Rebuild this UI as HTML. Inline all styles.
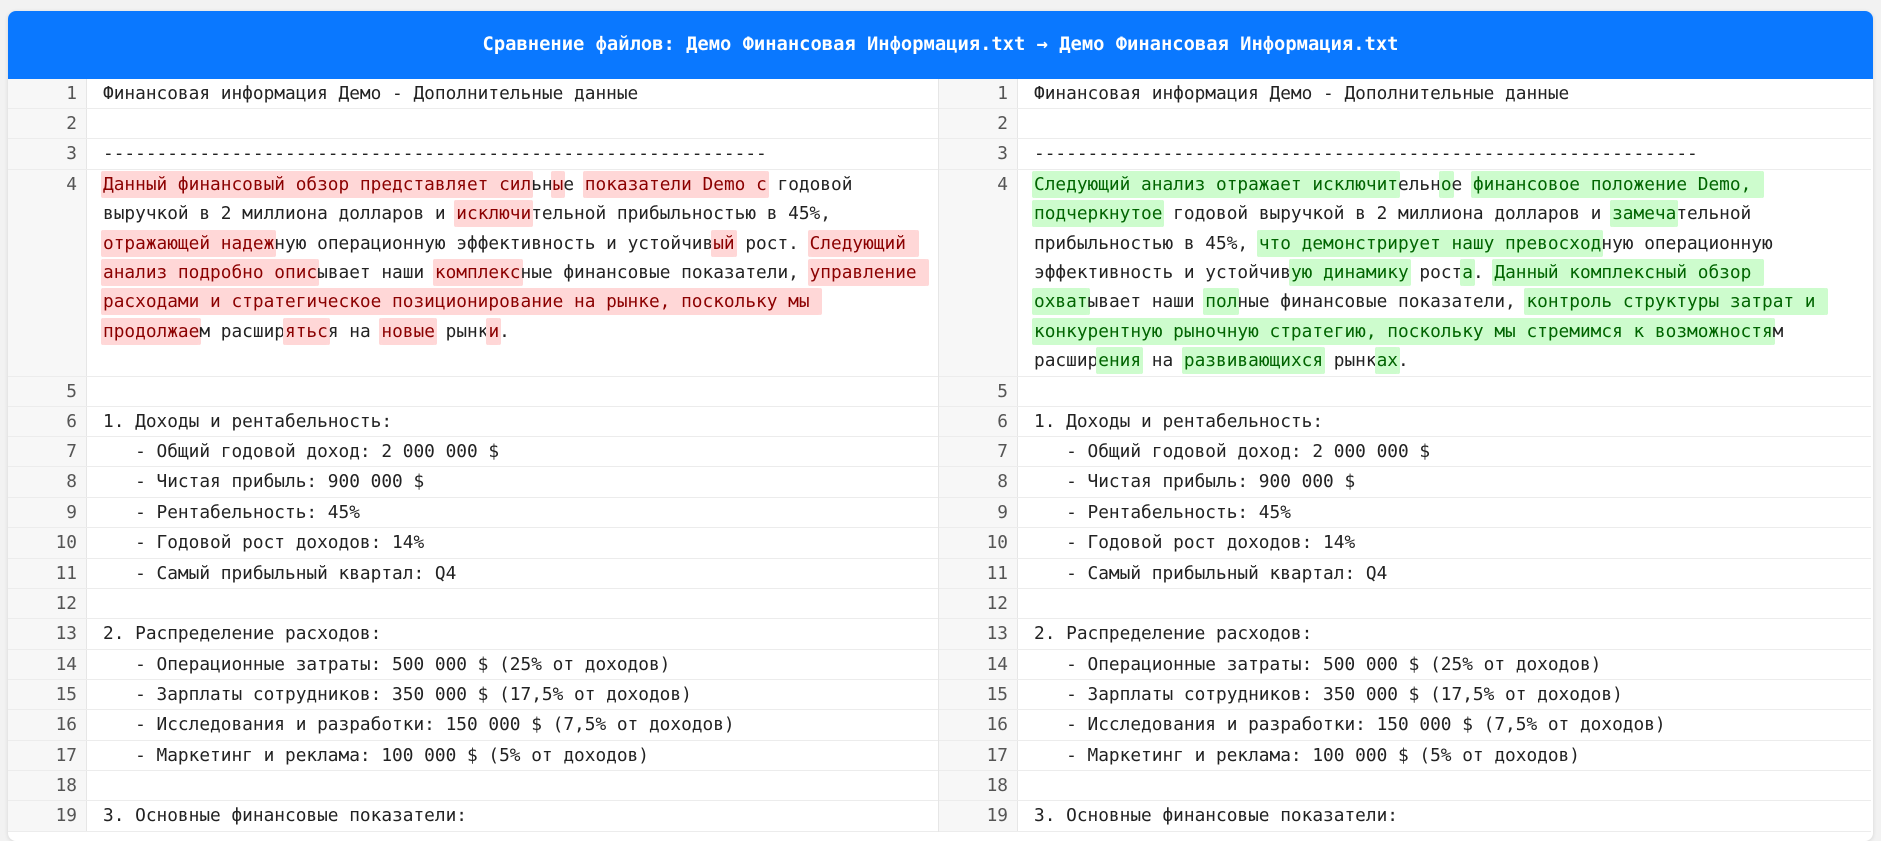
<!DOCTYPE html>
<html><head><meta charset="utf-8"><style>
html,body{margin:0;padding:0;background:#f2f2f2;width:1881px;height:817px;overflow:hidden}
.card{position:absolute;left:8px;top:11px;width:1865px;height:830px;background:#fff;border-radius:8px;overflow:hidden;box-shadow:0 1px 4px rgba(0,0,0,.12)}
.hdr{height:68px;background:#0a78ff;color:#fff;font:bold 18.8px "DejaVu Sans Mono","Liberation Mono",monospace;text-align:center;line-height:68px}
.pane{position:absolute;top:68px;width:932px;font:17.8px "DejaVu Sans Mono","Liberation Mono",monospace;color:#222}
.l{left:0}.r{left:930px;border-left:1px solid #e6e6e6}
.row{display:flex;border-bottom:1px solid #ececec}
.n{width:69px;padding-right:9px;flex:none;text-align:right;background:#f7f7f7;border-right:1px solid #e6e6e6;color:#555;line-height:29px}
.t{padding-left:16px;line-height:29.4px;white-space:pre}
.row>.n,.row>.t{min-height:29px}
.d{background:#ffd7d7;color:#8b0000;padding:3px 0;box-shadow:2px 0 0 #ffd7d7,-2px 0 0 #ffd7d7;border-radius:2px}
.a{background:#cdfccd;color:#006400;padding:3px 0;box-shadow:2px 0 0 #cdfccd,-2px 0 0 #cdfccd;border-radius:2px}
</style></head><body>
<div class="card">
<div class="hdr">Сравнение файлов: Демо Финансовая Информация.txt → Демо Финансовая Информация.txt</div>
<div class="pane l">
<div class="row"><div class="n">1</div><div class="t">Финансовая информация Демо - Дополнительные данные</div></div>
<div class="row"><div class="n">2</div><div class="t"></div></div>
<div class="row"><div class="n">3</div><div class="t">--------------------------------------------------------------</div></div>
<div class="row"><div class="n">4</div><div class="t"><span class="d">Данный финансовый обзор представляет сил</span>ьн<span class="d">ы</span>е <span class="d">показатели Demo с</span> годовой
выручкой в 2 миллиона долларов и <span class="d">исключи</span>тельной прибыльностью в 45%,
<span class="d">отражающей надеж</span>ную операционную эффективность и устойчив<span class="d">ый</span> рост. <span class="d">Следующий </span>
<span class="d">анализ подробно опис</span>ывает наши <span class="d">комплекс</span>ные финансовые показатели, <span class="d">управление </span>
<span class="d">расходами и стратегическое позиционирование на рынке, поскольку мы </span>
<span class="d">продолжае</span>м расшир<span class="d">ятьс</span>я на <span class="d">новые</span> рынк<span class="d">и</span>.
 </div></div>
<div class="row"><div class="n">5</div><div class="t"></div></div>
<div class="row"><div class="n">6</div><div class="t">1. Доходы и рентабельность:</div></div>
<div class="row"><div class="n">7</div><div class="t">   - Общий годовой доход: 2 000 000 $</div></div>
<div class="row"><div class="n">8</div><div class="t">   - Чистая прибыль: 900 000 $</div></div>
<div class="row"><div class="n">9</div><div class="t">   - Рентабельность: 45%</div></div>
<div class="row"><div class="n">10</div><div class="t">   - Годовой рост доходов: 14%</div></div>
<div class="row"><div class="n">11</div><div class="t">   - Самый прибыльный квартал: Q4</div></div>
<div class="row"><div class="n">12</div><div class="t"></div></div>
<div class="row"><div class="n">13</div><div class="t">2. Распределение расходов:</div></div>
<div class="row"><div class="n">14</div><div class="t">   - Операционные затраты: 500 000 $ (25% от доходов)</div></div>
<div class="row"><div class="n">15</div><div class="t">   - Зарплаты сотрудников: 350 000 $ (17,5% от доходов)</div></div>
<div class="row"><div class="n">16</div><div class="t">   - Исследования и разработки: 150 000 $ (7,5% от доходов)</div></div>
<div class="row"><div class="n">17</div><div class="t">   - Маркетинг и реклама: 100 000 $ (5% от доходов)</div></div>
<div class="row"><div class="n">18</div><div class="t"></div></div>
<div class="row"><div class="n">19</div><div class="t">3. Основные финансовые показатели:</div></div>
</div>
<div class="pane r">
<div class="row"><div class="n">1</div><div class="t">Финансовая информация Демо - Дополнительные данные</div></div>
<div class="row"><div class="n">2</div><div class="t"></div></div>
<div class="row"><div class="n">3</div><div class="t">--------------------------------------------------------------</div></div>
<div class="row"><div class="n">4</div><div class="t"><span class="a">Следующий анализ отражает исключит</span>ельн<span class="a">о</span>е <span class="a">финансовое положение Demo, </span>
<span class="a">подчеркнутое</span> годовой выручкой в 2 миллиона долларов и <span class="a">замеча</span>тельной
прибыльностью в 45%, <span class="a">что демонстрирует нашу превосход</span>ную операционную
эффективность и устойчив<span class="a">ую динамику</span> рост<span class="a">а</span>. <span class="a">Данный комплексный обзор </span>
<span class="a">охват</span>ывает наши <span class="a">пол</span>ные финансовые показатели, <span class="a">контроль структуры затрат и </span>
<span class="a">конкурентную рыночную стратегию, поскольку мы стремимся к возможностя</span>м
расшир<span class="a">ения</span> на <span class="a">развивающихся</span> рынк<span class="a">ах</span>.</div></div>
<div class="row"><div class="n">5</div><div class="t"></div></div>
<div class="row"><div class="n">6</div><div class="t">1. Доходы и рентабельность:</div></div>
<div class="row"><div class="n">7</div><div class="t">   - Общий годовой доход: 2 000 000 $</div></div>
<div class="row"><div class="n">8</div><div class="t">   - Чистая прибыль: 900 000 $</div></div>
<div class="row"><div class="n">9</div><div class="t">   - Рентабельность: 45%</div></div>
<div class="row"><div class="n">10</div><div class="t">   - Годовой рост доходов: 14%</div></div>
<div class="row"><div class="n">11</div><div class="t">   - Самый прибыльный квартал: Q4</div></div>
<div class="row"><div class="n">12</div><div class="t"></div></div>
<div class="row"><div class="n">13</div><div class="t">2. Распределение расходов:</div></div>
<div class="row"><div class="n">14</div><div class="t">   - Операционные затраты: 500 000 $ (25% от доходов)</div></div>
<div class="row"><div class="n">15</div><div class="t">   - Зарплаты сотрудников: 350 000 $ (17,5% от доходов)</div></div>
<div class="row"><div class="n">16</div><div class="t">   - Исследования и разработки: 150 000 $ (7,5% от доходов)</div></div>
<div class="row"><div class="n">17</div><div class="t">   - Маркетинг и реклама: 100 000 $ (5% от доходов)</div></div>
<div class="row"><div class="n">18</div><div class="t"></div></div>
<div class="row"><div class="n">19</div><div class="t">3. Основные финансовые показатели:</div></div>
</div>
</div>
</body></html>
